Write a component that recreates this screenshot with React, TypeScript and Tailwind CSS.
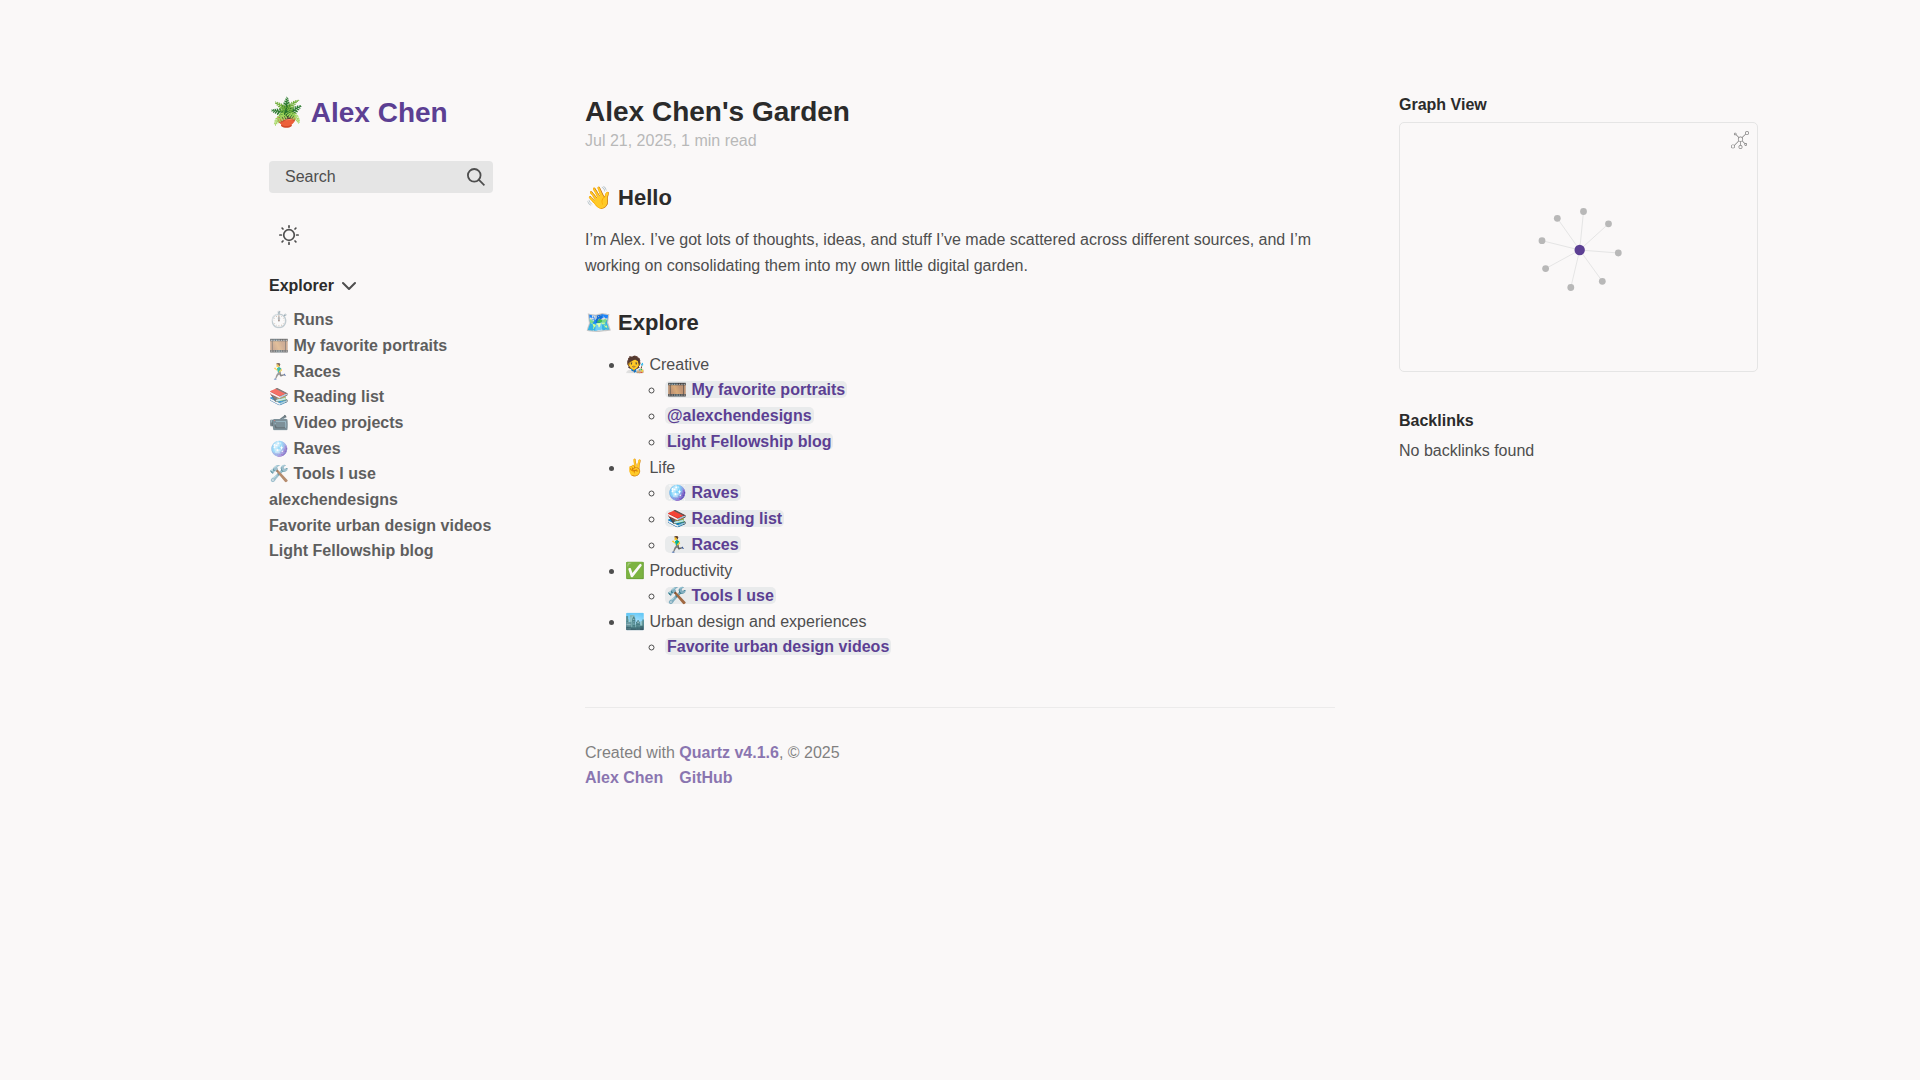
import React from "react";

const pages = [
  "⏱️ Runs",
  "🎞️ My favorite portraits",
  "🏃‍♂️ Races",
  "📚 Reading list",
  "📹 Video projects",
  "🪩 Raves",
  "🛠️ Tools I use",
  "alexchendesigns",
  "Favorite urban design videos",
  "Light Fellowship blog",
];

const topics = [
  {
    name: "🧑‍🎨 Creative",
    links: ["🎞️ My favorite portraits", "@alexchendesigns", "Light Fellowship blog"],
  },
  { name: "✌️ Life", links: ["🪩 Raves", "📚 Reading list", "🏃‍♂️ Races"] },
  { name: "✅ Productivity", links: ["🛠️ Tools I use"] },
  { name: "🏙️ Urban design and experiences", links: ["Favorite urban design videos"] },
];

const hub = [179.7, 127];
const nodes = [
  [157.3, 95.3],
  [183.5, 88.5],
  [208.5, 100.8],
  [218.3, 130],
  [202.3, 158.3],
  [170.8, 164.5],
  [145.6, 145.6],
  [142, 117.7],
];

function SearchIcon() {
  return (
    <svg className="size-[18px] shrink-0" viewBox="0 0 19.9 19.7" fill="none" stroke="currentColor" strokeWidth="2" aria-hidden="true">
      <path strokeLinecap="square" d="M18.5 18.3l-5.4-5.4" />
      <circle cx="8" cy="8" r="7" />
    </svg>
  );
}

function SunIcon() {
  return (
    <svg className="size-5" viewBox="0 0 35 35" fill="none" stroke="currentColor" strokeWidth="3" strokeLinecap="round" aria-hidden="true">
      <circle cx="17.5" cy="17.5" r="9.3" />
      <path d="M1.5 17.5h2.5M31 17.5h2.5M17.5 1.5v2.5M17.5 31v2.5M5.5 5.5l1.5 1.5M28 28l1.5 1.5M5.5 29.5l1.5-1.5M28 7l1.5-1.5" />
    </svg>
  );
}

function ChevronIcon() {
  return (
    <svg className="size-[14px]" viewBox="5 8 14 8" fill="none" stroke="currentColor" strokeWidth="2" strokeLinecap="round" strokeLinejoin="round" aria-hidden="true">
      <polyline points="6 9 12 15 18 9" />
    </svg>
  );
}

function GraphIcon() {
  return (
    <svg className="size-[18px]" viewBox="0 0 55 55" fill="currentColor" aria-hidden="true">
      <path d="M49,0c-3.309,0-6,2.691-6,6c0,1.035,0.263,2.009,0.726,2.86l-9.829,9.829C32.542,17.634,30.846,17,29,17s-3.542,0.634-4.898,1.688l-7.669-7.669C16.785,10.424,17,9.74,17,9c0-2.206-1.794-4-4-4S9,6.794,9,9s1.794,4,4,4c0.74,0,1.424-0.215,2.019-0.567l7.669,7.669C21.634,21.458,21,23.154,21,25s0.634,3.542,1.688,4.897L10.024,42.562C8.958,41.595,7.549,41,6,41c-3.309,0-6,2.691-6,6s2.691,6,6,6s6-2.691,6-6c0-1.035-0.263-2.009-0.726-2.86l12.829-12.829c1.106,0.86,2.44,1.436,3.898,1.619v10.16c-2.833,0.478-5,2.942-5,5.91c0,3.309,2.691,6,6,6s6-2.691,6-6c0-2.967-2.167-5.431-5-5.91v-10.16c1.458-0.183,2.792-0.759,3.898-1.619l7.669,7.669C41.215,39.576,41,40.26,41,41c0,2.206,1.794,4,4,4s4-1.794,4-4s-1.794-4-4-4c-0.74,0-1.424,0.215-2.019,0.567l-7.669-7.669C36.366,28.542,37,26.846,37,25s-0.634-3.542-1.688-4.897l9.665-9.665C46.042,11.405,47.451,12,49,12c3.309,0,6-2.691,6-6S52.309,0,49,0z M11,9c0-1.103,0.897-2,2-2s2,0.897,2,2s-0.897,2-2,2S11,10.103,11,9z M6,51c-2.206,0-4-1.794-4-4s1.794-4,4-4s4,1.794,4,4S8.206,51,6,51z M33,49c0,2.206-1.794,4-4,4s-4-1.794-4-4s1.794-4,4-4S33,46.794,33,49z M29,31c-3.309,0-6-2.691-6-6s2.691-6,6-6s6,2.691,6,6S32.309,31,29,31z M47,41c0,1.103-0.897,2-2,2s-2-0.897-2-2s0.897-2,2-2S47,39.897,47,41z M49,10c-2.206,0-4-1.794-4-4s1.794-4,4-4s4,1.794,4,4S51.206,10,49,10z" />
    </svg>
  );
}

function LeftSidebar() {
  return (
    <aside className="mr-[92px] w-[224px] justify-self-end pt-24">
      <p className="text-[28px] leading-[33px] font-bold text-[#5c3f93]">
        <a href="#">🪴 Alex Chen</a>
      </p>
      <div className="mt-8 flex h-8 items-center rounded-sm bg-[#e5e5e5] pr-2 pl-4">
        <input
          type="search"
          aria-label="Search"
          placeholder="Search"
          className="min-w-0 flex-1 bg-transparent outline-none placeholder:text-[#4e4e4e]"
        />
        <SearchIcon />
      </div>
      <button type="button" aria-label="Toggle dark mode" className="mt-8 ml-[10px] block">
        <SunIcon />
      </button>
      <button type="button" aria-expanded="true" className="mt-7 flex items-center gap-2">
        <span className="font-bold text-[#2b2b2b]">Explorer</span>
        <ChevronIcon />
      </button>
      <ul className="mt-2 font-bold whitespace-nowrap text-[#2b2b2b] opacity-75">
        {pages.map((page) => (
          <li key={page} className="nth-[3n]:leading-[25px]">
            <a href="#">{page}</a>
          </li>
        ))}
      </ul>
    </aside>
  );
}

function Article() {
  return (
    <main className="pt-24">
      <h1 className="text-[28px] leading-8 font-bold text-[#2b2b2b]">Alex Chen's Garden</h1>
      <p className="text-[#b8b8b8]">Jul 21, 2025, 1 min read</p>
      <h2 className="mt-[30px] text-[22px] leading-7 font-bold text-[#2b2b2b]">👋 Hello</h2>
      <p className="mt-[15px]">
        I’m Alex. I’ve got lots of thoughts, ideas, and stuff I’ve made scattered across different sources, and I’m
        working on consolidating them into my own little digital garden.
      </p>
      <h2 className="mt-[30px] text-[22px] leading-7 font-bold text-[#2b2b2b]">🗺️ Explore</h2>
      <ul className="mt-[15px] list-disc pl-10">
        {topics.map((topic) => (
          <li key={topic.name} className="leading-[25px]">
            {topic.name}
            <ul className="list-[circle] pl-10 leading-[26px]">
              {topic.links.map((link) => (
                <li key={link}>
                  <a href="#" className="rounded-[5px] bg-[#8f9fa9]/15 px-[2px] font-bold text-[#5c3f93]">
                    {link}
                  </a>
                </li>
              ))}
            </ul>
          </li>
        ))}
      </ul>
      <footer className="mt-[47px] leading-[25px] opacity-70">
        <hr className="mb-8 border-[#e5e5e5]" />
        <p>
          Created with{" "}
          <a href="#" className="font-bold text-[#5c3f93]">
            Quartz v4.1.6
          </a>
          , © 2025
        </p>
        <ul className="flex gap-4 font-bold text-[#5c3f93]">
          <li>
            <a href="#">Alex Chen</a>
          </li>
          <li>
            <a href="#">GitHub</a>
          </li>
        </ul>
      </footer>
    </main>
  );
}

function RightSidebar() {
  return (
    <aside className="ml-16 w-[359px] pt-[92px]">
      <h3 className="font-bold text-[#2b2b2b]">Graph View</h3>
      <div className="relative mt-1 rounded-[5px] border border-[#e5e5e5]">
        <svg className="block w-full" viewBox="0 0 357 248" role="img" aria-label="Graph of linked pages">
          {nodes.map(([x, y]) => (
            <line key={x} x1={hub[0]} y1={hub[1]} x2={x} y2={y} stroke="#e5e5e5" />
          ))}
          {nodes.map(([x, y]) => (
            <circle key={x} cx={x} cy={y} r="3.4" fill="#b8b8b8" />
          ))}
          <circle cx={hub[0]} cy={hub[1]} r="5.2" fill="#5c3f93" />
        </svg>
        <button type="button" aria-label="Open global graph" className="absolute top-2 right-2 opacity-75">
          <GraphIcon />
        </button>
      </div>
      <h3 className="mt-9 font-bold text-[#2b2b2b]">Backlinks</h3>
      <p className="mt-1">No backlinks found</p>
    </aside>
  );
}

export default function App() {
  return (
    <div className="grid min-h-screen grid-cols-[1fr_750px_1fr] items-start bg-[#faf8f8] font-['Liberation_Sans',sans-serif] text-base leading-[26px] text-[#4e4e4e]">
      <LeftSidebar />
      <Article />
      <RightSidebar />
    </div>
  );
}
